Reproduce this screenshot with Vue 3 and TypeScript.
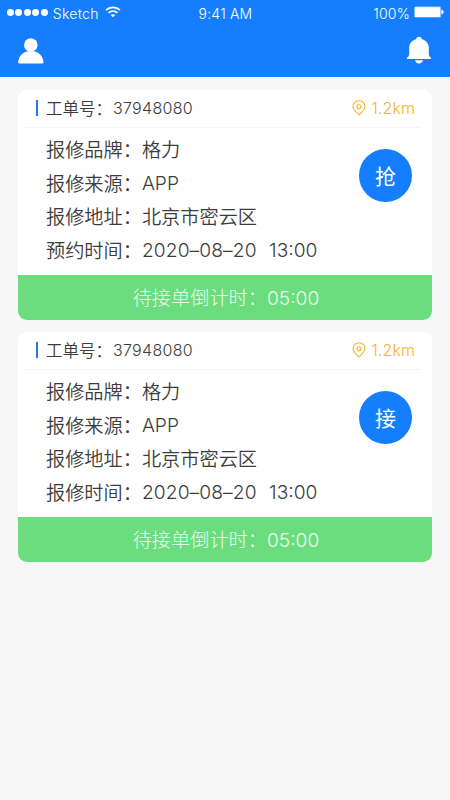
<script setup lang="ts">
interface Row {
  label: string
  value: string
  time?: string
  kind: 'cjk' | 'latin' | 'date'
}

interface Order {
  id: string
  distance: string
  action: string
  countdown: string
  rows: Row[]
}

const makeRows = (timeLabel: string): Row[] => [
  { label: '报修品牌：', value: '格力', kind: 'cjk' },
  { label: '报修来源：', value: 'APP', kind: 'latin' },
  { label: '报修地址：', value: '北京市密云区', kind: 'cjk' },
  { label: timeLabel, value: '2020–08–20', time: '13:00', kind: 'date' },
]

const orders: Order[] = [
  { id: '37948080', distance: '1.2km', action: '抢', countdown: '05:00', rows: makeRows('预约时间：') },
  { id: '37948080', distance: '1.2km', action: '接', countdown: '05:00', rows: makeRows('报修时间：') },
]
</script>

<template>
  <div class="screen">
    <header class="top">
      <div class="status">
        <div class="carrier">
          <div class="dots"><i v-for="n in 5" :key="n"></i></div>
          <span class="name">Sketch</span>
          <svg class="wifi" width="16" height="12" viewBox="0 0 16 12" fill="none" stroke="#fff" stroke-width="1.7">
            <path d="M1 4.2C5 .4 11 .4 15 4.2" />
            <path d="M3.6 6.9c2.6-2.3 6.2-2.3 8.8 0" />
            <path d="M8 11.2 5.7 9c1.3-1.1 3.3-1.1 4.6 0Z" fill="#fff" stroke="none" />
          </svg>
        </div>
        <span class="clock">9:41 AM</span>
        <div class="power">
          <span class="percent">100%</span>
          <svg width="30" height="12" viewBox="0 0 30 12">
            <rect x=".4" y=".4" width="26.6" height="11.2" rx="1.4" fill="#fff" fill-opacity=".55" />
            <rect x=".8" y="1.2" width="25.2" height="9.8" rx=".6" fill="#fff" />
            <path d="M27.4 3.4c2.9.8 2.9 4.400 0 5.200Z" fill="#fff" />
          </svg>
        </div>
      </div>
      <nav class="nav">
        <svg class="user" width="26" height="26" viewBox="0 0 26 26" fill="#fff">
          <circle cx="12.8" cy="7" r="6.8" />
          <path d="M.2 24.200C.6 18.200 5 14 9.600 13.200h6.400C20.800 14 25 18.200 25.400 24.200Q25.400 25.500 24 25.500H1.600Q.2 25.500 .2 24.200Z" />
        </svg>
        <svg width="26" height="28" viewBox="0 0 26 28" fill="#fff">
          <path d="M13 .8c1.600 0 2.700 1 2.900 2.500 4.300 1.200 6.900 4.300 6.900 8.700v5.300c0 1.900.3 3.300 1.900 4.200.8.400.5 1.500-.4 1.500H1.700c-.9 0-1.200-1.100-.4-1.500 1.600-.9 1.900-2.300 1.900-4.200V12c0-4.400 2.600-7.500 6.900-8.700C10.300 1.800 11.400.8 13 .8Z" />
          <path d="M9 24.200h8c-.5 2-1.900 3.200-4 3.200s-3.500-1.200-4-3.200Z" />
        </svg>
      </nav>
    </header>

    <main class="list">
      <article v-for="(order, i) in orders" :key="i" class="card">
        <div class="head">
          <i class="bar"></i>
          <span class="no">工单号：</span>
          <span class="id">{{ order.id }}</span>
          <svg class="pin" width="14" height="16" viewBox="0 0 14 16" fill="none" stroke="#f5b32a" stroke-width="1.1">
            <path d="M7 14.800C3.200 11.400 1 9.300 1 6.700a6 6 0 0 1 12 0c0 2.600-2.200 4.700-6 8.100Z" />
            <circle cx="7" cy="6.700" r="2" />
          </svg>
          <span class="distance">{{ order.distance }}</span>
        </div>
        <div class="body">
          <div class="rows">
            <div v-for="row in order.rows" :key="row.label" class="row">
              <span>{{ row.label }}</span>
              <span :class="row.kind">{{ row.value }}</span>
              <span v-if="row.time" class="time">{{ row.time }}</span>
            </div>
          </div>
          <button class="action" type="button">{{ order.action }}</button>
        </div>
        <div class="foot">
          <span>待接单倒计时：</span>
          <span class="count">{{ order.countdown }}</span>
        </div>
      </article>
    </main>
  </div>
</template>

<style>
body {
  background: #f7f7f7;
}
</style>

<style scoped>
.screen {
  width: 450px;
  height: 800px;
  overflow: hidden;
  background: #f7f7f7;
  color: #3c3c3c;
  font-family: Inter, "Noto Sans CJK SC", sans-serif;
  font-weight: 350;
}
.top {
  height: 77px;
  background: #147eff;
  color: #fff;
}
.status {
  display: grid;
  grid-template-columns: 1fr auto 1fr;
  align-items: center;
  height: 27px;
  padding: 0 6px 0 7px;
  font-size: 14px;
  font-weight: 300;
}
.carrier,
.power {
  display: flex;
  align-items: center;
}
.power {
  justify-content: flex-end;
  gap: 4px;
}
.percent {
  letter-spacing: 0.2px;
}
.power svg {
  margin-bottom: 3px;
}
.dots {
  display: flex;
  gap: 1.7px;
  margin-bottom: 2px;
}
.dots i {
  width: 6.8px;
  height: 6.8px;
  border-radius: 50%;
  background: #fff;
}
.name {
  margin-left: 5px;
  letter-spacing: 0.3px;
}
.clock {
  letter-spacing: 0.2px;
}
.wifi {
  margin: 0 0 3px 6px;
}
.nav {
  display: flex;
  justify-content: space-between;
  align-items: flex-start;
  padding: 9px 18px 0;
}
.user {
  margin-top: 2px;
}
.list {
  display: flex;
  flex-direction: column;
  gap: 12px;
  padding: 13px 18px 0;
}
.card {
  height: 230px;
  border-radius: 9px;
  background: #fff;
  overflow: hidden;
}
.head {
  display: flex;
  align-items: center;
  height: 38px;
  margin: 0 11px 0 7px;
  padding: 0 7px 1px 11px;
  border-bottom: 1px solid #f4f4f4;
  box-sizing: border-box;
  font-size: 16px;
}
.bar {
  width: 2px;
  height: 16px;
  margin-right: 8px;
  background: #2478ee;
}
.no {
  width: 67px;
  font-size: 16.5px;
}
.id {
  letter-spacing: 0.3px;
}
.pin {
  margin-left: auto;
}
.distance {
  margin-left: 5px;
  margin-right: -1px;
  color: #f5b32a;
  letter-spacing: 0.1px;
}
.body {
  display: flex;
  justify-content: space-between;
  height: 147px;
  padding: 5px 20px 0 28px;
  box-sizing: border-box;
}
.row {
  display: flex;
  height: 33.6px;
  line-height: 34.6px;
  font-size: 19.2px;
}
.latin,
.date,
.time {
  line-height: 32.6px;
}
.date {
  letter-spacing: 0.1px;
}
.time {
  margin-left: 12.5px;
}
.action {
  width: 53px;
  height: 53px;
  margin-top: 16px;
  padding: 0;
  border: 0;
  border-radius: 50%;
  background: #147eff;
  color: #fff;
  font: 400 21px/53px "Noto Sans CJK SC", sans-serif;
}
.foot {
  display: flex;
  justify-content: center;
  height: 45px;
  line-height: 47px;
  padding-left: 2px;
  background: #6bdd7e;
  color: #e9fbec;
  font-size: 19.2px;
  font-weight: 300;
}
</style>
